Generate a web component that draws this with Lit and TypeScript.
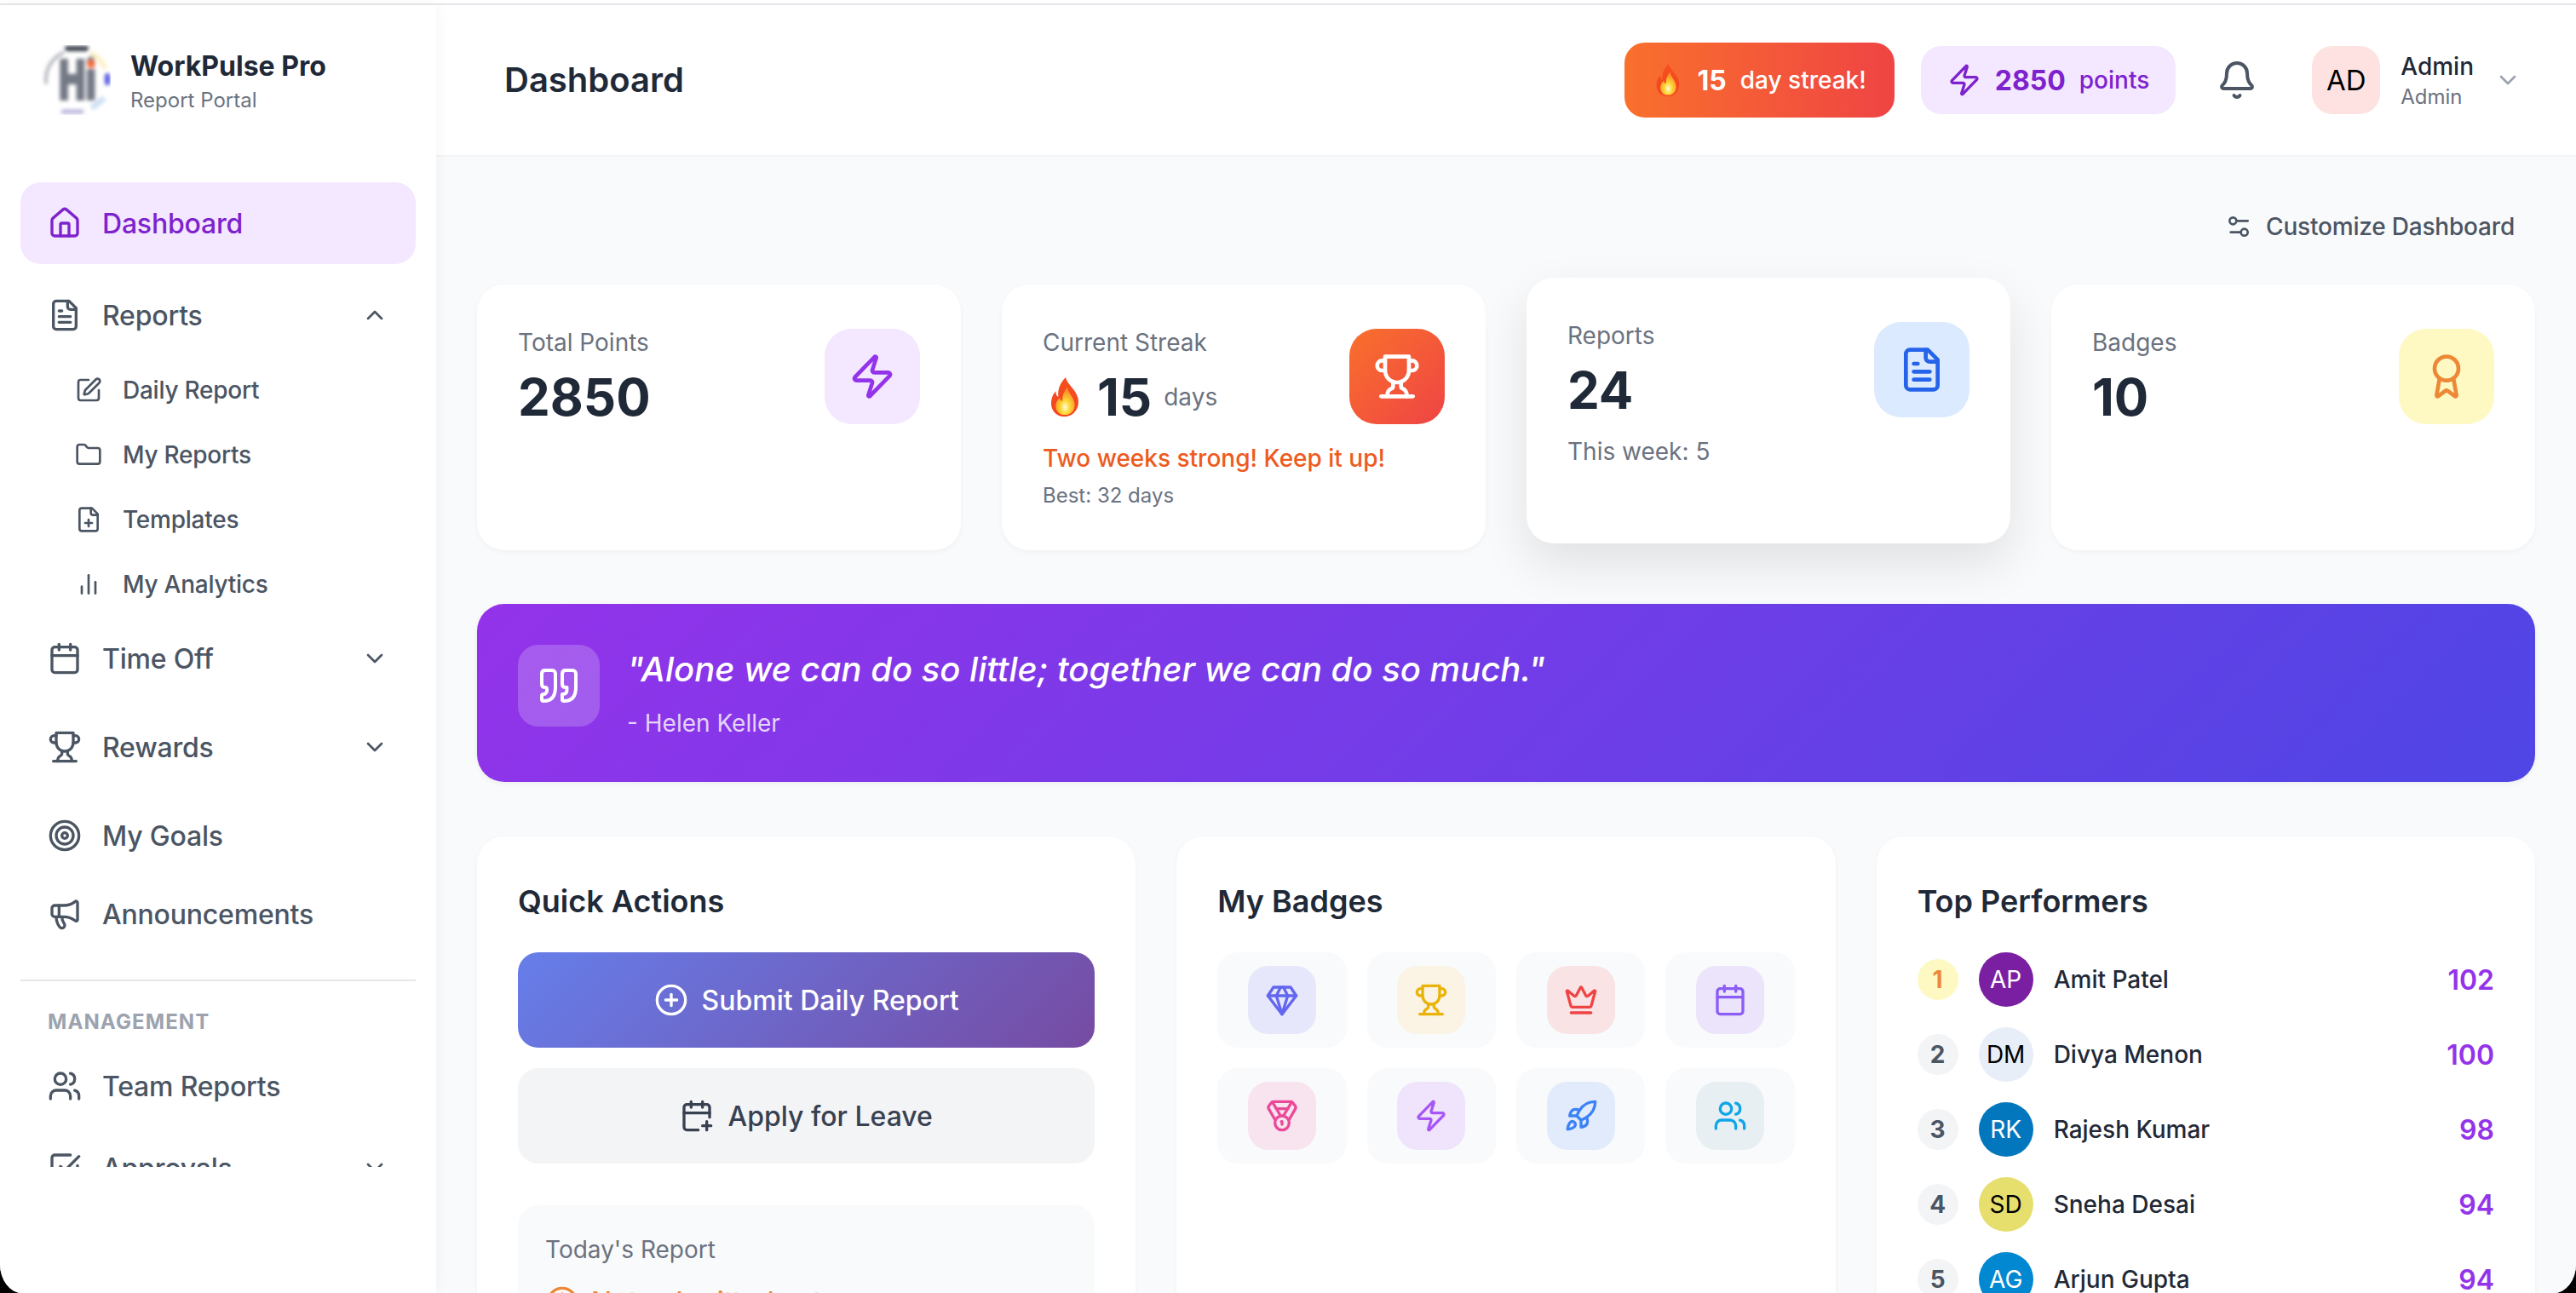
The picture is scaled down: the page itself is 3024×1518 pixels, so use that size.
import { css, html, LitElement, svg } from 'lit'
import { customElement } from 'lit/decorators.js'

/**
 * =========================================================================
 * ICONS
 * =========================================================================
 */
const ICONS = {
  house: svg`<path d="M15 21v-8a1 1 0 0 0-1-1h-4a1 1 0 0 0-1 1v8"/><path d="M3 10a2 2 0 0 1 .709-1.528l7-5.999a2 2 0 0 1 2.582 0l7 5.999A2 2 0 0 1 21 10v9a2 2 0 0 1-2 2H5a2 2 0 0 1-2-2z"/>`,
  fileText: svg`<path d="M15 2H6a2 2 0 0 0-2 2v16a2 2 0 0 0 2 2h12a2 2 0 0 0 2-2V7Z"/><path d="M14 2v4a2 2 0 0 0 2 2h4"/><path d="M10 9H8"/><path d="M16 13H8"/><path d="M16 17H8"/>`,
  filePlus: svg`<path d="M15 2H6a2 2 0 0 0-2 2v16a2 2 0 0 0 2 2h12a2 2 0 0 0 2-2V7Z"/><path d="M14 2v4a2 2 0 0 0 2 2h4"/><path d="M9 15h6"/><path d="M12 18v-6"/>`,
  pen: svg`<path d="M12 3H5a2 2 0 0 0-2 2v14a2 2 0 0 0 2 2h14a2 2 0 0 0 2-2v-7"/><path d="M18.375 2.625a1 1 0 0 1 3 3l-9.013 9.014a2 2 0 0 1-.853.505l-2.873.84a.5.5 0 0 1-.62-.62l.84-2.873a2 2 0 0 1 .506-.852z"/>`,
  folder: svg`<path d="M20 20a2 2 0 0 0 2-2V8a2 2 0 0 0-2-2h-7.9a2 2 0 0 1-1.69-.9L9.6 3.9A2 2 0 0 0 7.93 3H4a2 2 0 0 0-2 2v13a2 2 0 0 0 2 2Z"/>`,
  chart: svg`<path d="M18 20V10"/><path d="M12 20V4"/><path d="M6 20v-6"/>`,
  calendar: svg`<path d="M8 2v4"/><path d="M16 2v4"/><rect x="3" y="4" width="18" height="18" rx="2"/><path d="M3 10h18"/>`,
  calendarPlus: svg`<path d="M8 2v4"/><path d="M16 2v4"/><path d="M21 13V6a2 2 0 0 0-2-2H5a2 2 0 0 0-2 2v14a2 2 0 0 0 2 2h8"/><path d="M3 10h18"/><path d="M16 19h6"/><path d="M19 16v6"/>`,
  trophy: svg`<path d="M6 9H4.5a2.5 2.5 0 0 1 0-5H6"/><path d="M18 9h1.5a2.5 2.5 0 0 0 0-5H18"/><path d="M4 22h16"/><path d="M10 14.66V17c0 .55-.47.98-.97 1.21C7.85 18.75 7 20.24 7 22"/><path d="M14 14.66V17c0 .55.47.98.97 1.21C16.15 18.75 17 20.24 17 22"/><path d="M18 2H6v7a6 6 0 0 0 12 0V2Z"/>`,
  target: svg`<circle cx="12" cy="12" r="10"/><circle cx="12" cy="12" r="6"/><circle cx="12" cy="12" r="2"/>`,
  megaphone: svg`<path d="M11 6a13 13 0 0 0 8.4-2.8A1 1 0 0 1 21 4v12a1 1 0 0 1-1.6.8A13 13 0 0 0 11 14H5a2 2 0 0 1-2-2V8a2 2 0 0 1 2-2z"/><path d="M6 14a12 12 0 0 0 2.4 7.2 2 2 0 0 0 3.2-2.4A8 8 0 0 1 10 14"/><path d="M8 6v8"/>`,
  users: svg`<path d="M16 21v-2a4 4 0 0 0-4-4H6a4 4 0 0 0-4 4v2"/><circle cx="9" cy="7" r="4"/><path d="M22 21v-2a4 4 0 0 0-3-3.87"/><path d="M16 3.13a4 4 0 0 1 0 7.75"/>`,
  check: svg`<path d="M21 10.5V19a2 2 0 0 1-2 2H5a2 2 0 0 1-2-2V5a2 2 0 0 1 2-2h11"/><path d="m9 11 3 3L22 4"/>`,
  chevronUp: svg`<path d="m18 15-6-6-6 6"/>`,
  chevronDown: svg`<path d="m6 9 6 6 6-6"/>`,
  bell: svg`<path d="M10.268 21a2 2 0 0 0 3.464 0"/><path d="M3.262 15.326A1 1 0 0 0 4 17h16a1 1 0 0 0 .74-1.673C19.41 13.956 18 12.499 18 8A6 6 0 0 0 6 8c0 4.499-1.411 5.956-2.738 7.326"/>`,
  sliders: svg`<path d="M20 7h-9"/><path d="M14 17H5"/><circle cx="17" cy="17" r="3"/><circle cx="7" cy="7" r="3"/>`,
  zap: svg`<path d="M4 14a1 1 0 0 1-.78-1.63l9.9-10.2a.5.5 0 0 1 .86.46l-1.92 6.02A1 1 0 0 0 13 10h7a1 1 0 0 1 .78 1.63l-9.9 10.2a.5.5 0 0 1-.86-.46l1.92-6.02A1 1 0 0 0 11 14z"/>`,
  award: svg`<path d="m15.477 12.89 1.515 8.526a.5.5 0 0 1-.81.47l-3.58-2.687a1 1 0 0 0-1.197 0l-3.586 2.686a.5.5 0 0 1-.81-.469l1.514-8.526"/><circle cx="12" cy="8" r="6"/>`,
  quote: svg`<path d="M3 21c3 0 7-1 7-8V5c0-1.25-.756-2.017-2-2H4c-1.25 0-2 .75-2 1.972V11c0 1.25.75 2 2 2 1 0 1 0 1 1v1c0 1-1 2-2 2s-1 .008-1 1.031V20c0 1 0 1 1 1z"/><path d="M15 21c3 0 7-1 7-8V5c0-1.25-.757-2.017-2-2h-4c-1.25 0-2 .75-2 1.972V11c0 1.25.75 2 2 2h.75c0 2.25.25 4-2.75 4v3c0 1 0 1 1 1z"/>`,
  circlePlus: svg`<circle cx="12" cy="12" r="10"/><path d="M8 12h8"/><path d="M12 8v8"/>`,
  clock: svg`<circle cx="12" cy="12" r="10"/><path d="M12 6v6l4 2"/>`,
  gem: svg`<path d="M6 3h12l4 6-10 13L2 9Z"/><path d="M11 3 8 9l4 13 4-13-3-6"/><path d="M2 9h20"/>`,
  crown: svg`<path d="M11.562 3.266a.5.5 0 0 1 .876 0L15.39 8.87a1 1 0 0 0 1.516.294L21.183 5.5a.5.5 0 0 1 .798.519l-2.834 10.246a1 1 0 0 1-.956.734H5.81a1 1 0 0 1-.957-.734L2.02 6.02a.5.5 0 0 1 .798-.519l4.276 3.664a1 1 0 0 0 1.516-.294z"/><path d="M5 21h14"/>`,
  medal: svg`<path d="M7.21 15 2.66 7.14a2 2 0 0 1 .13-2.2L4.4 2.8A2 2 0 0 1 6 2h12a2 2 0 0 1 1.6.8l1.6 2.14a2 2 0 0 1 .14 2.2L16.79 15"/><path d="M11 12 5.12 2.2"/><path d="m13 12 5.88-9.8"/><path d="M8 7h8"/><circle cx="12" cy="17" r="5"/><path d="M12 18v-2h-.5"/>`,
  rocket: svg`<path d="M4.5 16.5c-1.5 1.26-2 5-2 5s3.74-.5 5-2c.71-.84.7-2.13-.09-2.91a2.18 2.18 0 0 0-2.91-.09z"/><path d="m12 15-3-3a22 22 0 0 1 2-3.95A12.88 12.88 0 0 1 22 2c0 2.72-.78 7.5-6 11a22.35 22.35 0 0 1-4 2z"/><path d="M9 12H4s.55-3.03 2-4c1.62-1.08 5 0 5 0"/><path d="M12 15v5s3.03-.55 4-2c1.08-1.62 0-5 0-5"/>`,
}

type IconName = keyof typeof ICONS

const icon = (name: IconName, size = 'i40') =>
  html`<svg class="icon ${size}" viewBox="0 0 24 24" fill="none" stroke="currentColor" stroke-width="2" stroke-linecap="round" stroke-linejoin="round" aria-hidden="true">${ICONS[name]}</svg>`

// The fire emoji, there is no emoji font to use for it
const flame = (size: string) =>
  html`<svg class="flame ${size}" viewBox="0 0 40 50" aria-hidden="true">
    <defs>
      <linearGradient id="fire" x1="0" y1="0" x2="0" y2="1">
        <stop offset="0" stop-color="#f4511e" />
        <stop offset="1" stop-color="#f4431f" />
      </linearGradient>
      <radialGradient id="core" cx="0.5" cy="0.72" r="0.6">
        <stop offset="0" stop-color="#fffde0" />
        <stop offset="0.4" stop-color="#fdd835" />
        <stop offset="1" stop-color="#fb8c28" />
      </radialGradient>
    </defs>
    <path fill="url(#fire)" d="M21 1c2 9 12 14 15 25 3 12-5 23-16 23C8 49 1 39 4 27c1-3 2-6 5-9 0 4 1 6 3 7C11 15 15 7 21 1Z" />
    <path fill="url(#core)" d="M23 13c1 7 8 12 9 20 1 9-5 14-12 14S8 42 9 34c1-4 3-6 5-8 0 2 1 4 3 4 0-7 2-12 6-17Z" />
  </svg>`

/**
 * =========================================================================
 * DATA
 * =========================================================================
 */
const SUB_ITEMS: [IconName, string][] = [
  ['pen', 'Daily Report'],
  ['folder', 'My Reports'],
  ['filePlus', 'Templates'],
  ['chart', 'My Analytics'],
]

const BADGES: [IconName, string][] = [
  ['gem', 'indigo'],
  ['trophy', 'amber'],
  ['crown', 'red'],
  ['calendar', 'violet'],
  ['medal', 'pink'],
  ['zap', 'purple'],
  ['rocket', 'blue'],
  ['users', 'sky'],
]

const PERFORMERS = [
  { initials: 'AP', name: 'Amit Patel', score: 102, tone: 'av-purple' },
  { initials: 'DM', name: 'Divya Menon', score: 100, tone: 'av-pale' },
  { initials: 'RK', name: 'Rajesh Kumar', score: 98, tone: 'av-blue' },
  { initials: 'SD', name: 'Sneha Desai', score: 94, tone: 'av-yellow' },
  { initials: 'AG', name: 'Arjun Gupta', score: 94, tone: 'av-sky' },
]

@customElement('app-root')
export class AppRoot extends LitElement {
  /**
   * =========================================================================
   * CSS
   * =========================================================================
   */
  static styles = css`
    :host {
      display: block;
      width: 3024px;
      height: 1518px;
      background: #000;
      font-family: Inter, 'Noto Sans', sans-serif;
      color: #1f2937;
    }
    * {
      box-sizing: border-box;
    }
    .window {
      display: flex;
      flex-direction: column;
      height: 100%;
      padding-top: 4px;
      background: #fff;
      border-radius: 0 0 26px 26px / 0 0 34px 34px;
      overflow: hidden;
    }
    .top-rule {
      flex: none;
      height: 2px;
      background: #e5e7eb;
    }
    .shell {
      display: flex;
      flex: 1;
      min-height: 0;
    }
    .icon {
      display: block;
      flex: none;
    }
    .i32 {
      width: 32px;
      height: 32px;
    }
    .i40 {
      width: 40px;
      height: 40px;
    }
    .i48 {
      width: 48px;
      height: 48px;
    }
    .i56 {
      width: 56px;
      height: 56px;
    }

    /* sidebar */
    .sidebar {
      position: relative;
      z-index: 2;
      flex: none;
      width: 512px;
      background: #fff;
      box-shadow: 2px 0 16px rgb(0 0 0 / 0.04);
    }
    .brand {
      display: flex;
      gap: 23px;
      height: 208px;
      padding: 47px 48px 0;
    }
    .logo {
      display: block;
      flex: none;
      width: 82px;
      height: 82px;
    }
    .brand-name {
      margin-top: 3px;
      font-size: 32px;
      line-height: 44px;
      font-weight: 700;
      color: #1f2937;
      white-space: nowrap;
    }
    .brand-sub {
      margin-top: 2px;
      font-size: 24px;
      line-height: 32px;
      color: #6b7280;
    }
    .nav {
      height: 1156px;
      padding: 0 24px;
      overflow: hidden;
    }
    .item {
      display: flex;
      align-items: center;
      gap: 24px;
      height: 92px;
      padding: 0 32px;
      border-radius: 24px;
      font-size: 32px;
      font-weight: 500;
      letter-spacing: -0.2px;
      color: #4b5563;
    }
    .item .label {
      flex: 1;
    }
    .item.active {
      height: 96px;
      margin-bottom: 14px;
      background: #f3e8ff;
      color: #7e22ce;
    }
    .item.group {
      margin-bottom: 12px;
    }
    .item.approvals {
      margin-top: 4px;
    }
    .subs {
      padding: 4px 0 3px;
    }
    .sub {
      display: flex;
      align-items: center;
      gap: 24px;
      height: 76px;
      padding-left: 64px;
      font-size: 28px;
      font-weight: 500;
      letter-spacing: -0.25px;
      color: #4b5563;
    }
    .rule {
      height: 2px;
      margin-top: 31px;
      background: #e5e7eb;
    }
    .section {
      margin-top: 32px;
      padding-left: 32px;
      font-size: 24px;
      line-height: 32px;
      font-weight: 700;
      letter-spacing: 1.1px;
      color: #9ca3af;
    }
    .section + .item {
      margin-top: 13px;
    }

    /* header */
    .main {
      display: flex;
      flex: 1;
      flex-direction: column;
      min-width: 0;
      background: #f9fafb;
    }
    .header {
      position: relative;
      z-index: 1;
      display: flex;
      flex: none;
      align-items: center;
      height: 178px;
      padding: 0 64px 0 80px;
      background: #fff;
      border-bottom: 2px solid #f3f4f6;
    }
    .title {
      flex: 1;
      margin: 0 0 2px;
      font-size: 40px;
      font-weight: 600;
      color: #1f2937;
    }
    .streak-pill,
    .points-pill {
      display: flex;
      align-items: center;
      gap: 16px;
      border-radius: 24px;
      font-size: 28px;
      font-weight: 500;
    }
    .streak-pill {
      height: 88px;
      margin-right: 31px;
      padding: 0 33px;
      background: linear-gradient(90deg, #f9702c, #ef4444);
      color: #fff;
    }
    .points-pill {
      height: 80px;
      margin-right: 48px;
      padding: 0 31px;
      background: #f3e8ff;
      color: #7e22ce;
    }
    .pill-num {
      font-size: 32px;
      font-weight: 700;
    }
    .flame-sm {
      width: 36px;
      height: 40px;
    }
    .flame-lg {
      width: 40px;
      height: 48px;
      margin: 0 18px 0 6px;
    }
    .bell {
      margin-right: 64px;
      color: #4b5563;
    }
    .user {
      display: flex;
      align-items: center;
      gap: 24px;
    }
    .user-av {
      display: flex;
      align-items: center;
      justify-content: center;
      width: 80px;
      height: 80px;
      border-radius: 24px;
      background: #fee2e2;
      font-size: 33px;
      color: #000;
    }
    .user-name {
      padding-top: 1px;
      font-size: 28px;
      line-height: 36px;
      font-weight: 500;
      color: #1f2937;
    }
    .user-role {
      font-size: 24px;
      line-height: 32px;
      color: #6b7280;
      margin-top: 2px;
    }
    .user-chevron {
      color: #9ca3af;
    }

    /* content */
    .content {
      flex: 1;
      min-height: 0;
      padding: 48px 48px 0;
      overflow: hidden;
    }
    .customize-row {
      display: flex;
      justify-content: flex-end;
      height: 68px;
      margin-bottom: 34px;
    }
    .customize {
      display: flex;
      align-items: center;
      gap: 16px;
      padding-right: 24px;
      font-size: 28px;
      font-weight: 500;
      letter-spacing: -0.2px;
      color: #4b5563;
    }
    .stats {
      display: grid;
      grid-template-columns: repeat(4, 1fr);
      grid-template-rows: 312px;
      gap: 48px;
      margin-bottom: 63px;
    }
    .card {
      padding: 48px;
      background: #fff;
      border-radius: 32px;
      box-shadow: 0 2px 6px rgb(0 0 0 / 0.04);
    }
    .card.raised {
      transform: translateY(-8px);
      box-shadow: 0 24px 56px rgb(0 0 0 / 0.1);
    }
    .card-top {
      display: flex;
      justify-content: space-between;
      align-items: flex-start;
      height: 120px;
    }
    .stat-label {
      font-size: 28px;
      line-height: 40px;
      color: #6b7280;
    }
    .stat-value {
      display: flex;
      align-items: center;
      margin-top: 8px;
      font-size: 60px;
      line-height: 72px;
      font-weight: 700;
      color: #1f2937;
    }
    .stat-unit {
      margin-left: 14px;
      font-size: 28px;
      font-weight: 400;
      color: #6b7280;
    }
    .stat-note {
      margin-top: 16px;
      font-size: 28px;
      line-height: 40px;
      color: #6b7280;
    }
    .stat-note.hot {
      font-weight: 500;
      color: #ee5a1e;
    }
    .stat-best {
      margin-top: 8px;
      font-size: 24px;
      line-height: 32px;
      color: #6b7280;
    }
    .stat-icon {
      display: flex;
      flex: none;
      align-items: center;
      justify-content: center;
      width: 112px;
      height: 112px;
      margin-top: 4px;
      border-radius: 32px;
    }
    .si-purple {
      background: #f3e8ff;
      color: #9333ea;
    }
    .si-fire {
      background: linear-gradient(135deg, #f9702c, #ef4444);
      color: #fff;
    }
    .si-blue {
      background: #dbeafe;
      color: #2563eb;
    }
    .si-yellow {
      background: #fef9c3;
      color: #ed8936;
    }

    /* quote */
    .quote {
      display: flex;
      gap: 32px;
      height: 209px;
      margin-bottom: 64px;
      padding: 48px;
      background: linear-gradient(135deg, #9333ea, #4f46e5);
      border-radius: 32px;
      box-shadow: 0 2px 6px rgb(0 0 0 / 0.06);
      color: #fff;
    }
    .quote-icon {
      display: flex;
      flex: none;
      align-items: center;
      justify-content: center;
      width: 96px;
      height: 96px;
      border-radius: 24px;
      background: rgb(255 255 255 / 0.2);
    }
    .quote-text {
      margin-top: -1px;
      font-size: 40px;
      line-height: 60px;
      font-weight: 500;
      font-style: italic;
    }
    .quote-by {
      margin-top: 13px;
      font-size: 28px;
      line-height: 40px;
      color: rgb(255 255 255 / 0.8);
    }

    /* panels */
    .panels {
      display: grid;
      grid-template-columns: repeat(3, 1fr);
      gap: 48px;
    }
    .panel {
      height: 640px;
      padding: 48px;
      background: #fff;
      border-radius: 32px;
      box-shadow: 0 2px 6px rgb(0 0 0 / 0.04);
    }
    .panel-title {
      margin: 0 0 32px;
      font-size: 36px;
      line-height: 56px;
      font-weight: 600;
      color: #1f2937;
    }
    .action {
      display: flex;
      align-items: center;
      justify-content: center;
      gap: 16px;
      height: 112px;
      margin-bottom: 24px;
      border-radius: 24px;
      font-size: 32px;
      font-weight: 500;
    }
    .action.primary {
      background: linear-gradient(135deg, #667eea, #764ba2);
      color: #fff;
    }
    .action.secondary {
      background: #f3f4f6;
      color: #374151;
    }
    .today {
      margin-top: 49px;
      padding: 32px;
      background: #f9fafb;
      border-radius: 24px;
    }
    .today-label {
      font-size: 28px;
      line-height: 40px;
      color: #6b7280;
    }
    .today-status {
      display: flex;
      align-items: center;
      gap: 14px;
      margin-top: 18px;
      font-size: 32px;
      line-height: 48px;
      font-weight: 500;
      color: #ed8936;
    }
    .badges {
      display: grid;
      grid-template-columns: repeat(4, 1fr);
      gap: 24px;
    }
    .badge {
      display: flex;
      justify-content: center;
      padding: 16px;
      background: #f9fafb;
      border-radius: 24px;
    }
    .badge-box {
      display: flex;
      align-items: center;
      justify-content: center;
      width: 80px;
      height: 80px;
      border-radius: 24px;
    }
    .indigo {
      background: #e7e7fb;
      color: #6366f1;
    }
    .amber {
      background: #fbf3e3;
      color: #eab308;
    }
    .red {
      background: #fae3e5;
      color: #ef4444;
    }
    .violet {
      background: #ebe4fb;
      color: #8b5cf6;
    }
    .pink {
      background: #f8e4ee;
      color: #ec4899;
    }
    .purple {
      background: #efe4fb;
      color: #a855f7;
    }
    .blue {
      background: #e1ebfb;
      color: #3b82f6;
    }
    .sky {
      background: #e8eff3;
      color: #0ea5e9;
    }
    .people {
      display: flex;
      flex-direction: column;
      gap: 24px;
    }
    .person {
      display: flex;
      align-items: center;
      height: 64px;
    }
    .rank {
      display: flex;
      flex: none;
      align-items: center;
      justify-content: center;
      width: 48px;
      height: 48px;
      margin-right: 24px;
      border-radius: 50%;
      background: #f3f4f6;
      font-size: 28px;
      font-weight: 700;
      color: #4b5563;
    }
    .rank.first {
      background: #fef9c3;
      color: #ed8936;
    }
    .avatar {
      display: flex;
      flex: none;
      align-items: center;
      justify-content: center;
      width: 64px;
      height: 64px;
      margin-right: 24px;
      border-radius: 50%;
      font-size: 28px;
    }
    .av-purple {
      background: #7b1fa2;
      color: #fff;
    }
    .av-pale {
      background: #e8eef7;
      color: #000;
    }
    .av-blue {
      background: #0277bd;
      color: #fff;
    }
    .av-yellow {
      background: #e6df6e;
      color: #000;
    }
    .av-sky {
      background: #0288d1;
      color: #fff;
    }
    .person-name {
      flex: 1;
      font-size: 28px;
      font-weight: 500;
      color: #1f2937;
    }
    .person-score {
      font-size: 32px;
      font-weight: 600;
      color: #9333ea;
    }
  `

  /**
   * =========================================================================
   * PARTS
   * =========================================================================
   */
  private renderLogo() {
    return html`<svg class="logo" viewBox="0 0 82 82" aria-hidden="true">
      <defs>
        <filter id="soft"><feGaussianBlur stdDeviation="2" /></filter>
      </defs>
      <g filter="url(#soft)" fill="none" stroke-linecap="round">
        <path d="M6 44A35 35 0 0 1 26 9" stroke="#b6b8c0" stroke-width="4" />
        <path d="M31 4h22" stroke="#373c49" stroke-width="6" />
        <path d="M60 10a35 35 0 0 1 15 16" stroke="#fbefc0" stroke-width="5" />
        <path d="M78 36v8" stroke="#4f52e0" stroke-width="6" />
        <path d="M62 72l10-8" stroke="#cfe0f2" stroke-width="7" />
        <path d="M26 78h22" stroke="#b9b4dc" stroke-width="5" />
        <text x="21" y="64" textLength="44" lengthAdjust="spacingAndGlyphs" font-family="Inter" font-size="64" font-weight="900" fill="#737985" stroke="#737985" stroke-width="2">Hi</text>
        <circle cx="59" cy="22" r="5" fill="#f2703c" />
      </g>
    </svg>`
  }

  private renderSidebar() {
    return html`<aside class="sidebar">
      <div class="brand">
        ${this.renderLogo()}
        <div>
          <div class="brand-name">WorkPulse Pro</div>
          <div class="brand-sub">Report Portal</div>
        </div>
      </div>
      <nav class="nav">
        <div class="item active">${icon('house')}<span class="label">Dashboard</span></div>
        <div class="item">${icon('fileText')}<span class="label">Reports</span>${icon('chevronUp', 'i32')}</div>
        <div class="subs">
          ${SUB_ITEMS.map(([name, label]) => html`<div class="sub">${icon(name, 'i32')}<span>${label}</span></div>`)}
        </div>
        <div class="item group">${icon('calendar')}<span class="label">Time Off</span>${icon('chevronDown', 'i32')}</div>
        <div class="item group">${icon('trophy')}<span class="label">Rewards</span>${icon('chevronDown', 'i32')}</div>
        <div class="item">${icon('target')}<span class="label">My Goals</span></div>
        <div class="item">${icon('megaphone')}<span class="label">Announcements</span></div>
        <div class="rule"></div>
        <div class="section">MANAGEMENT</div>
        <div class="item">${icon('users')}<span class="label">Team Reports</span></div>
        <div class="item approvals">${icon('check')}<span class="label">Approvals</span>${icon('chevronDown', 'i32')}</div>
      </nav>
    </aside>`
  }

  private renderHeader() {
    return html`<header class="header">
      <h1 class="title">Dashboard</h1>
      <div class="streak-pill">${flame('flame-sm')}<span class="pill-num">15</span><span>day streak!</span></div>
      <div class="points-pill">${icon('zap')}<span class="pill-num">2850</span><span>points</span></div>
      <div class="bell">${icon('bell', 'i48')}</div>
      <div class="user">
        <div class="user-av">AD</div>
        <div>
          <div class="user-name">Admin</div>
          <div class="user-role">Admin</div>
        </div>
        <div class="user-chevron">${icon('chevronDown', 'i32')}</div>
      </div>
    </header>`
  }

  private renderStats() {
    return html`<section class="stats">
      <div class="card">
        <div class="card-top">
          <div>
            <div class="stat-label">Total Points</div>
            <div class="stat-value">2850</div>
          </div>
          <div class="stat-icon si-purple">${icon('zap', 'i56')}</div>
        </div>
      </div>
      <div class="card">
        <div class="card-top">
          <div>
            <div class="stat-label">Current Streak</div>
            <div class="stat-value">${flame('flame-lg')}15<span class="stat-unit">days</span></div>
          </div>
          <div class="stat-icon si-fire">${icon('trophy', 'i56')}</div>
        </div>
        <div class="stat-note hot">Two weeks strong! Keep it up!</div>
        <div class="stat-best">Best: 32 days</div>
      </div>
      <div class="card raised">
        <div class="card-top">
          <div>
            <div class="stat-label">Reports</div>
            <div class="stat-value">24</div>
          </div>
          <div class="stat-icon si-blue">${icon('fileText', 'i56')}</div>
        </div>
        <div class="stat-note">This week: 5</div>
      </div>
      <div class="card">
        <div class="card-top">
          <div>
            <div class="stat-label">Badges</div>
            <div class="stat-value">10</div>
          </div>
          <div class="stat-icon si-yellow">${icon('award', 'i56')}</div>
        </div>
      </div>
    </section>`
  }

  private renderPanels() {
    return html`<section class="panels">
      <div class="panel">
        <h2 class="panel-title">Quick Actions</h2>
        <div class="action primary">${icon('circlePlus')}<span>Submit Daily Report</span></div>
        <div class="action secondary">${icon('calendarPlus')}<span>Apply for Leave</span></div>
        <div class="today">
          <div class="today-label">Today's Report</div>
          <div class="today-status">${icon('clock')}<span>Not submitted yet</span></div>
        </div>
      </div>
      <div class="panel">
        <h2 class="panel-title">My Badges</h2>
        <div class="badges">
          ${BADGES.map(
            ([name, tone]) => html`<div class="badge"><div class="badge-box ${tone}">${icon(name)}</div></div>`,
          )}
        </div>
      </div>
      <div class="panel">
        <h2 class="panel-title">Top Performers</h2>
        <div class="people">
          ${PERFORMERS.map(
            (p, i) => html`<div class="person">
              <div class="rank ${i === 0 ? 'first' : ''}">${i + 1}</div>
              <div class="avatar ${p.tone}">${p.initials}</div>
              <div class="person-name">${p.name}</div>
              <div class="person-score">${p.score}</div>
            </div>`,
          )}
        </div>
      </div>
    </section>`
  }

  /**
   * =========================================================================
   * LIFECYCLE
   * =========================================================================
   */
  render() {
    return html`<div class="window">
      <div class="top-rule"></div>
      <div class="shell">
        ${this.renderSidebar()}
        <main class="main">
          ${this.renderHeader()}
          <div class="content">
            <div class="customize-row">
              <div class="customize">${icon('sliders', 'i32')}<span>Customize Dashboard</span></div>
            </div>
            ${this.renderStats()}
            <section class="quote">
              <div class="quote-icon">${icon('quote', 'i48')}</div>
              <div>
                <div class="quote-text">"Alone we can do so little; together we can do so much."</div>
                <div class="quote-by">- Helen Keller</div>
              </div>
            </section>
            ${this.renderPanels()}
          </div>
        </main>
      </div>
    </div>`
  }
}

declare global {
  interface HTMLElementTagNameMap {
    'app-root': AppRoot
  }
}
